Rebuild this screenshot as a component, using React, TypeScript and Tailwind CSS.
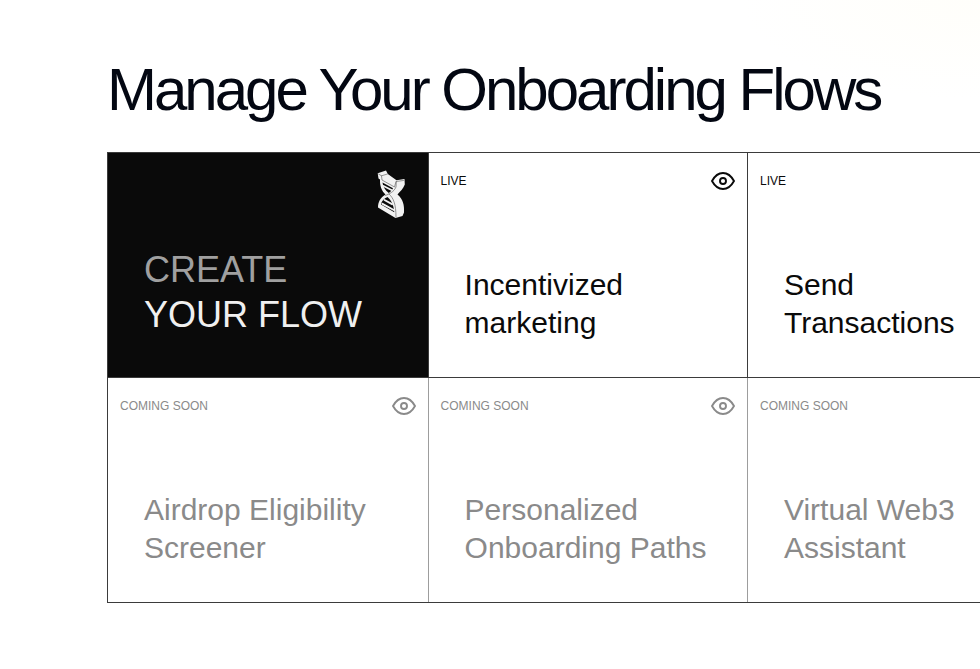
import React from "react";

function Eye() {
  return (
    <svg viewBox="0 0 24 24" className="h-6 w-6 shrink-0" fill="none" stroke="currentColor" strokeWidth="1.9" strokeLinecap="round" strokeLinejoin="round">
      <path d="M1 12C4 6.500 7.500 4 12 4s8 2.500 11 8c-3 5.500-6.500 8-11 8s-8-2.500-11-8z" />
      <circle cx="12" cy="12" r="3" />
    </svg>
  );
}

function Helix() {
  return (
    <svg viewBox="0 0 34 54" className="h-[54px] w-[34px]" strokeLinejoin="round" strokeLinecap="round">
      <path
        fill="#f2f2f2"
        d="M3.700 7.200 12 4.600 13.800 8 22.500 14.200 30.500 13 30.800 18.500C29 23 26.500 25 23.500 28.500 29 33 30.500 39 30 46.500L28.500 50 21.500 52 4 41.500C4 36 6.500 31.500 11.500 28.500 7.500 24.500 5.800 20 6 13.500L4.500 12.500z"
      />
      <path fill="#0a0a0a" d="M8.500 16.500 19 22.300C18 24.500 16.500 26 14.800 27 11.500 24.500 9 21 8.500 16.500zM7 38.500C7.500 35 10 32.300 13.500 31 17 34 19.500 38 20.300 46.200z" />
      <path fill="none" stroke="#f2f2f2" strokeWidth="1.900" d="M9.500 20 17.500 24M10.500 34 18 38.200M8.500 37.800 19.800 44" />
      <g fill="none" stroke="#686868" strokeWidth="0.7">
        <path d="M4.500 8 7.500 9.800 13.500 8M7.500 9.800 8 14 20.500 21 22 15.500 29.500 14.500M22.300 15.500 22 21C20 26 15 28 11.500 29.500" />
        <path d="M15 28C19.500 32 22 38 22 51" />
      </g>
    </svg>
  );
}

type Tile = { title: [string, string]; live: boolean };

function Card({ title, live }: Tile) {
  return (
    <div className={`flex h-[224px] flex-col justify-between border-l p-3 pb-[35px] ${live ? "border-[#3b3b3b] text-[#0a0a0a]" : "border-[#9d9d9d] text-[#8a8a8a] first:border-[#3b3b3b]"}`}>
      <div className="flex items-center justify-between pt-1">
        <span className="text-xs leading-4">{live ? "LIVE" : "COMING SOON"}</span>
        <Eye />
      </div>
      <h3 className="pl-6 text-[30px] leading-[38px] whitespace-nowrap">
        {title[0]}
        <br />
        {title[1]}
      </h3>
    </div>
  );
}

export default function App() {
  return (
    <main className="h-[669px] w-full overflow-hidden bg-white bg-[radial-gradient(ellipse_240px_100px_at_100%_0%,#fffefa,#ffffff)] pl-[107px] pt-[60px] font-['Liberation_Sans',Arial,sans-serif] antialiased">
      <h1 className="h-[92px] text-[60px] leading-[60px] tracking-[-3px] whitespace-nowrap text-[#030712]">Manage Your Onboarding Flows</h1>
      <section className="w-[960px] border-t border-[#3b3b3b]">
        <div className="grid grid-cols-[320.6px_319.400px_320px] border-b border-[#3b3b3b]">
          <div className="flex h-[224px] flex-col justify-between border-l border-[#3b3b3b] bg-[#0a0a0a] pt-[13px] pr-[19.6px] pb-[40px] pl-9">
            <div className="flex justify-end">
              <Helix />
            </div>
            <h2 className="text-4xl leading-[45px] text-[#a0a0a0]">
              CREATE
              <br />
              <span className="text-[#f0f0f0]">YOUR FLOW</span>
            </h2>
          </div>
          <Card title={["Incentivized", "marketing"]} live />
          <Card title={["Send", "Transactions"]} live />
        </div>
        <div className="grid grid-cols-[320.6px_319.400px_320px] border-b border-[#3b3b3b]">
          <Card title={["Airdrop Eligibility", "Screener"]} live={false} />
          <Card title={["Personalized", "Onboarding Paths"]} live={false} />
          <Card title={["Virtual Web3", "Assistant"]} live={false} />
        </div>
      </section>
    </main>
  );
}
